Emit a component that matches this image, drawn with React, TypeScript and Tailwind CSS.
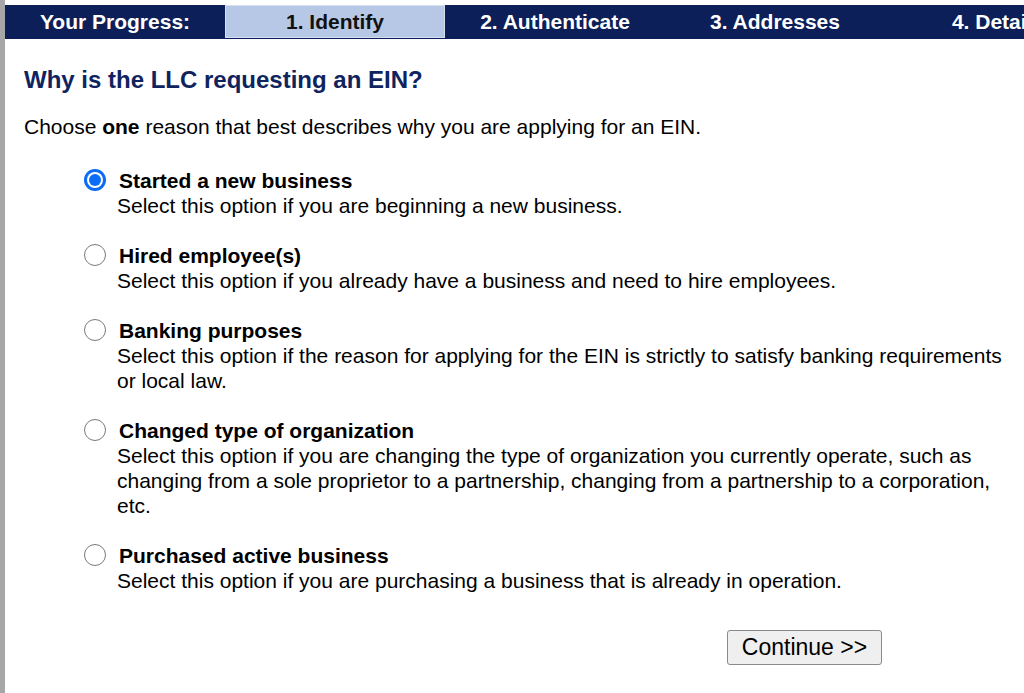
import React from "react";

const options = [
  {
    title: "Started a new business",
    desc: "Select this option if you are beginning a new business.",
    checked: true,
  },
  {
    title: "Hired employee(s)",
    desc: "Select this option if you already have a business and need to hire employees.",
  },
  {
    title: "Banking purposes",
    desc: "Select this option if the reason for applying for the EIN is strictly to satisfy banking requirements or local law.",
  },
  {
    title: "Changed type of organization",
    desc: "Select this option if you are changing the type of organization you currently operate, such as changing from a sole proprietor to a partnership, changing from a partnership to a corporation, etc.",
  },
  {
    title: "Purchased active business",
    desc: "Select this option if you are purchasing a business that is already in operation.",
  },
];

function Radio({ checked }: { checked?: boolean }) {
  if (checked) {
    return (
      <div className="w-[22px] h-[22px] rounded-full bg-[#0b6cf5] flex items-center justify-center">
        <div className="w-[16px] h-[16px] rounded-full bg-white flex items-center justify-center">
          <div className="w-[12px] h-[12px] rounded-full bg-[#0b6cf5]" />
        </div>
      </div>
    );
  }
  return <div className="w-[22px] h-[22px] rounded-full border-[1.5px] border-[#7a7a7a] bg-white" />;
}

export default function App() {
  const tabs = [
    { label: "Your Progress:", w: "w-[220px]" },
    { label: "1. Identify", w: "w-[220px]", active: true },
    { label: "2. Authenticate", w: "w-[220px]" },
    { label: "3. Addresses", w: "w-[220px]" },
    { label: "4. Details", w: "w-[226px]" },
  ];
  return (
    <div
      className="w-[1024px] h-[693px] overflow-hidden bg-white flex text-black"
      style={{ fontFamily: '"Liberation Sans", Arial, sans-serif' }}
    >
      <div className="w-[5px] shrink-0 bg-[#a7a7a7]" />
      <div className="flex-1 min-w-0 pt-[5px]">
        <div className="flex h-[34px] bg-[#0c1f58] border-b border-[#0c1f58] overflow-hidden whitespace-nowrap">
          {tabs.map((t) => (
            <div
              key={t.label}
              className={`${t.w} shrink-0 flex items-center justify-center text-[21px] font-bold leading-none ${
                t.active
                  ? "bg-[#b7c8e6] text-[#111] border border-[#d5dff0]"
                  : "text-white"
              }`}
            >
              {t.label}
            </div>
          ))}
        </div>
        <div className="pl-[19px]">
          <h1 className="mt-[27px] text-[24px] leading-[28px] font-bold text-[#0f245e]">
            Why is the LLC requesting an EIN?
          </h1>
          <p className="mt-[20px] text-[21px] leading-[25px]">
            Choose <b>one</b> reason that best describes why you are applying for an EIN.
          </p>
          <div className="mt-[29px] pl-[60px] flex flex-col gap-[25px]">
            {options.map((o) => (
              <div key={o.title} className="flex">
                <div className="w-[33px] shrink-0 pt-[1px]">
                  <Radio checked={o.checked} />
                </div>
                <div className="w-[895px] text-[21px] leading-[25px]">
                  <div className="font-bold pl-[2px]">{o.title}</div>
                  <div>{o.desc}</div>
                </div>
              </div>
            ))}
          </div>
          <div className="mt-[37px] pl-[703px]">
            <button className="w-[155px] h-[35px] rounded-[3px] border border-[#8a8a8a] bg-[#efefef] text-[23px] leading-none text-black">
              Continue &gt;&gt;
            </button>
          </div>
        </div>
      </div>
    </div>
  );
}
